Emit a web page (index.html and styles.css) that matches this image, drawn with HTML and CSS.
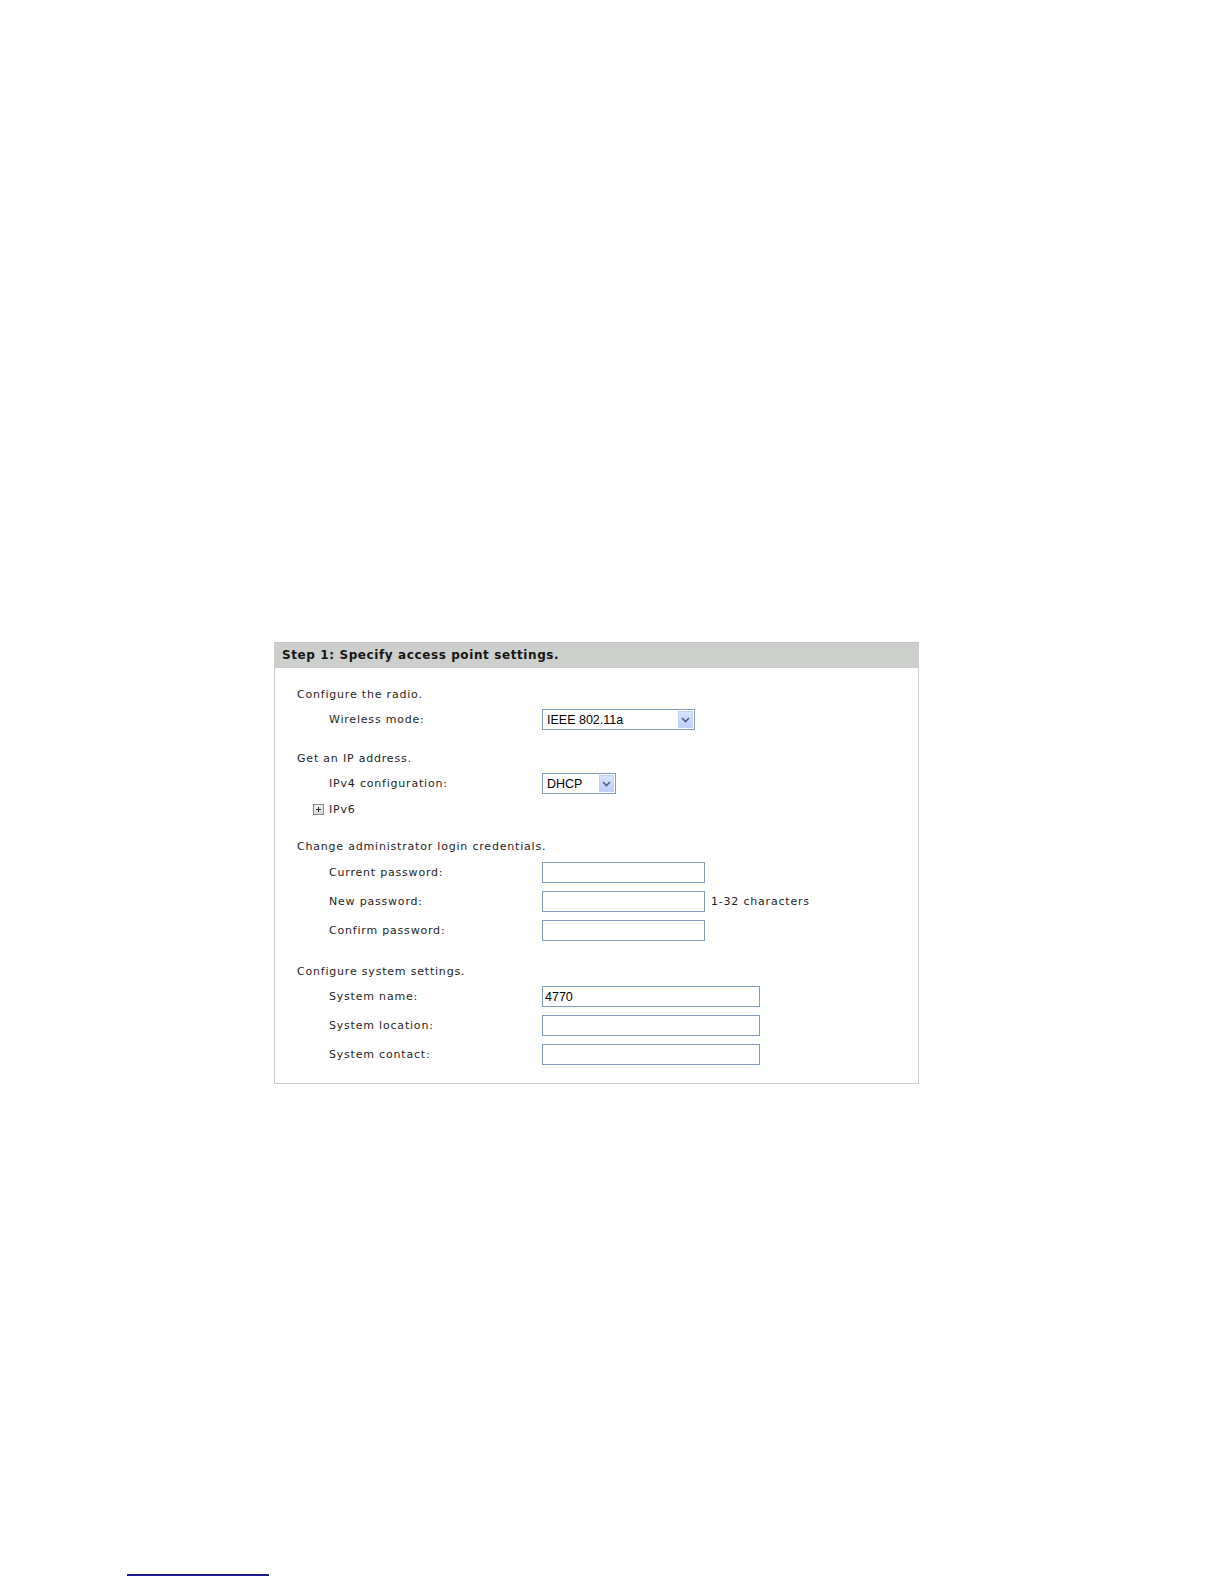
FILE: index.html
```html
<!DOCTYPE html>
<html>
<head>
<meta charset="utf-8">
<link rel="stylesheet" href="styles.css">
</head>
<body>
<div class="page">
  <div class="panel">
    <div class="panel-head">Step 1: Specify access point settings.</div>
    <div class="panel-body">
      <div class="section s1">
        <div class="title">Configure the radio.</div>
        <div class="row first">
          <div class="label">Wireless mode:</div>
          <div class="select wide"><span class="val">IEEE 802.11a</span><span class="btn"><svg width="9" height="6" viewBox="0 0 9 6"><path d="M1 1 L4.5 4.5 L8 1" fill="none" stroke="#4a5f86" stroke-width="1.6"/></svg></span></div>
        </div>
      </div>
      <div class="section s2">
        <div class="title">Get an IP address.</div>
        <div class="row first">
          <div class="label">IPv4 configuration:</div>
          <div class="select narrow"><span class="val">DHCP</span><span class="btn"><svg width="9" height="6" viewBox="0 0 9 6"><path d="M1 1 L4.5 4.5 L8 1" fill="none" stroke="#4a5f86" stroke-width="1.6"/></svg></span></div>
        </div>
        <div class="row ipv6">
          <span class="plus"><svg width="11" height="11" viewBox="0 0 11 11"><defs><linearGradient id="pg" x1="0" y1="0" x2="0" y2="1"><stop offset="0" stop-color="#f4f4f4"/><stop offset="1" stop-color="#d6d6d6"/></linearGradient></defs><rect x="0.5" y="0.5" width="10" height="10" fill="url(#pg)" stroke="#8c8c8c"/><path d="M3 5.5 H8 M5.5 3 V8" stroke="#333" stroke-width="1"/></svg></span>
          <span class="label">IPv6</span>
        </div>
      </div>
      <div class="section s3">
        <div class="title">Change administrator login credentials.</div>
        <div class="row first">
          <div class="label">Current password:</div>
          <div class="input short"></div>
        </div>
        <div class="row">
          <div class="label">New password:</div>
          <div class="input short"></div>
          <div class="hint">1-32 characters</div>
        </div>
        <div class="row">
          <div class="label">Confirm password:</div>
          <div class="input short"></div>
        </div>
      </div>
      <div class="section s4">
        <div class="title">Configure system settings.</div>
        <div class="row first">
          <div class="label">System name:</div>
          <div class="input long"><span class="val">4770</span></div>
        </div>
        <div class="row">
          <div class="label">System location:</div>
          <div class="input long"></div>
        </div>
        <div class="row">
          <div class="label">System contact:</div>
          <div class="input long"></div>
        </div>
      </div>
    </div>
  </div>
  <div class="footnote"><div class="rule"></div></div>
</div>
</body>
</html>
```

FILE: styles.css
```css
html, body {
  margin: 0;
  padding: 0;
  background: #ffffff;
}

.page {
  width: 1224px;
  height: 1584px;
  padding-top: 642px;
  box-sizing: border-box;
  font-family: "DejaVu Sans", Verdana, sans-serif;
  font-size: 11px;
  letter-spacing: 0.8px;
  color: #1e1e1e;
}

.panel {
  margin-left: 274px;
  width: 645px;
  box-sizing: border-box;
  border: 1px solid #c9c9c9;
  border-top: none;
}

.panel-head {
  height: 26px;
  line-height: 24px;
  background: #cdcfcc;
  border-top: 1px solid #c4c4c4;
  box-sizing: border-box;
  padding-left: 8px;
  font-weight: bold;
  font-size: 12px;
  letter-spacing: 0.6px;
  color: #141414;
  margin: 0 -1px;
}

.panel-body {
  padding: 19px 0 18px 22px;
}

.title {
  height: 16px;
  line-height: 16px;
}

.section.s2 { margin-top: 21px; }
.section.s3 { margin-top: 19px; }
.section.s4 { margin-top: 23px; }

.row {
  display: flex;
  align-items: center;
  height: 21px;
  padding-left: 32px;
  margin-top: 8px;
}

.row.first { margin-top: 6px; }
.s3 .row.first { margin-top: 7px; }
.row.ipv6 {
  margin-top: 5px;
  padding-left: 16px;
}

.label {
  width: 213px;
  flex: none;
}

.ipv6 .label { width: auto; }

.plus {
  display: flex;
  width: 11px;
  height: 11px;
  margin-right: 5px;
}

.select, .input {
  height: 21px;
  box-sizing: border-box;
  border: 1px solid #7f9db9;
  background: #fff;
  display: flex;
  align-items: center;
  font-family: "Liberation Sans", Arial, sans-serif;
  font-size: 12.5px;
  letter-spacing: 0;
  color: #000;
}

.select.wide { width: 153px; }
.select.narrow { width: 74px; }
.input.short { width: 163px; }
.input.long { width: 218px; }

.select .val {
  flex: 1;
  padding-left: 4px;
}

.input .val { padding-left: 2px; }

.select .btn {
  width: 15px;
  height: 17px;
  margin-right: 1px;
  background: linear-gradient(#d9e4fe, #bccdfa);
  border: 1px solid #c3d3f5;
  box-sizing: border-box;
  display: flex;
  align-items: center;
  justify-content: center;
}

.hint {
  margin-left: 6px;
}

.footnote {
  margin-top: 490px;
  padding-left: 127px;
}

.rule {
  width: 142px;
  height: 2px;
  background: #1c1c8e;
}
```
